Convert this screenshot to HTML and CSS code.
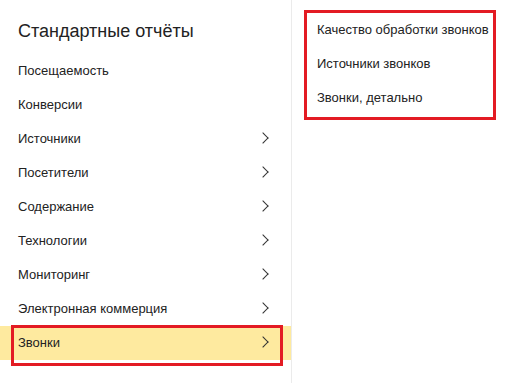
FILE: index.html
```html
<!DOCTYPE html>
<html lang="ru">
<head>
    <meta charset="UTF-8">
    <meta name="viewport" content="width=device-width, initial-scale=1.0">
    <title>Стандартные отчёты</title>
    <link rel="stylesheet" href="styles.css">
</head>
<body>
    <div class="menu">
        <div class="reports">
            <h1 class="reports-title">Стандартные отчёты</h1>
            <ul class="report-list">
                <li class="report">Посещаемость</li>
                <li class="report">Конверсии</li>
                <li class="report has-sub">Источники</li>
                <li class="report has-sub">Посетители</li>
                <li class="report has-sub">Содержание</li>
                <li class="report has-sub">Технологии</li>
                <li class="report has-sub">Мониторинг</li>
                <li class="report has-sub">Электронная коммерция</li>
                <li class="report has-sub active">Звонки</li>
            </ul>
        </div>
        <div class="submenu">
            <ul class="sub-list">
                <li class="sub-item">Качество обработки звонков</li>
                <li class="sub-item">Источники звонков</li>
                <li class="sub-item">Звонки, детально</li>
            </ul>
        </div>
    </div>
</body>
</html>
```

FILE: styles.css
```css
* {
    margin: 0;
    padding: 0;
    box-sizing: border-box;
}

body {
    background: #fff;
    font-family: 'Liberation Sans', Arial, sans-serif;
    color: #222;
}

.menu {
    display: flex;
    height: 383px;
}

.reports {
    width: 292px;
    border-right: 1px solid #ebebeb;
}

.reports-title {
    font-size: 18px;
    font-weight: normal;
    line-height: 24px;
    padding: 19px 18px 0;
    margin-bottom: 11px;
    color: #222;
}

.report-list,
.sub-list {
    list-style: none;
}

.report {
    position: relative;
    height: 34px;
    line-height: 34px;
    font-size: 13px;
    padding: 0 21px 0 18px;
}

.report.has-sub::after {
    content: '';
    position: absolute;
    right: 24px;
    top: 12px;
    width: 7px;
    height: 7px;
    border-top: 1px solid #333;
    border-right: 1px solid #333;
    transform: rotate(45deg);
}

.report.active {
    background: #feea9f;
}

.report.active::before {
    content: '';
    position: absolute;
    left: 11px;
    top: -1px;
    width: 266px;
    height: 35px;
    border: 3px solid #e31b23;
}

.submenu {
    padding: 10px 0 0 12px;
}

.sub-list {
    display: inline-block;
    border: 3px solid #e31b23;
    padding: 0 4px 2px 10px;
}

.sub-item {
    height: 34px;
    line-height: 34px;
    font-size: 13px;
    white-space: nowrap;
}
```
